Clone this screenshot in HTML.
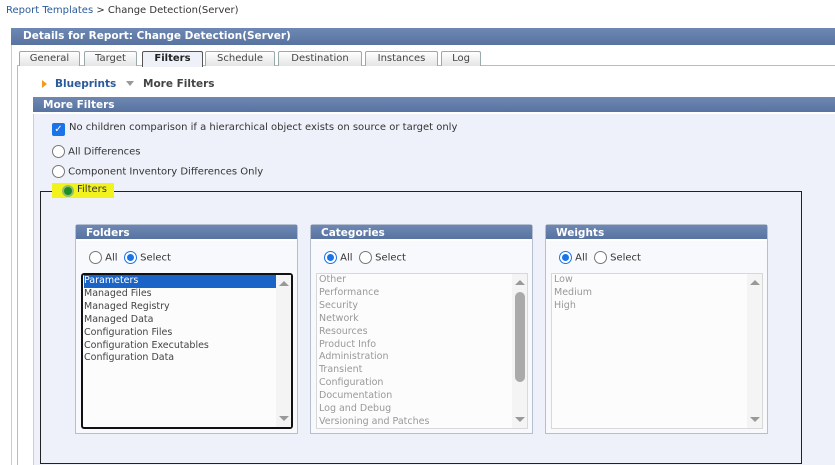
<!DOCTYPE html>
<html><head><style>
*{box-sizing:border-box}
body{margin:0;width:835px;height:465px;overflow:hidden;background:#fff;font-family:"DejaVu Sans",Verdana,sans-serif;font-size:10px;color:#333;position:relative}
.a{position:absolute}
.hdr{background:linear-gradient(#6e88b3,#5873a0);color:#fff;font-weight:bold;font-size:10.5px;padding-left:12px;line-height:17px}
.tab{position:absolute;top:51px;height:15px;border:1px solid #9aa;border-bottom:none;background:linear-gradient(#fff,#e4e4e4);text-align:center;font-size:10px;line-height:13px;color:#444;border-radius:2px 2px 0 0}
.rad{display:inline-block;width:13px;height:13px;border:1px solid #777;border-radius:50%;background:#fff;vertical-align:middle;position:relative}
.rad.on{border:1px solid #1a73e8}
.rad.on:after{content:"";position:absolute;left:2px;top:2px;width:7px;height:7px;border-radius:50%;background:#1a73e8}
.pan{position:absolute;top:224px;width:223px;height:210px;border:1px solid #b6bfcf;background:#f8f9fc;border-radius:3px 3px 0 0}
.pan .h{height:16px;background:linear-gradient(#6e88b3,#5873a0);color:#fff;font-weight:bold;font-size:10.5px;padding-left:10px;line-height:16px;border-bottom:2px solid #fff}
.list{position:absolute;left:5px;top:48px;width:212px;height:156px;border:1px solid #d8d8d8;background:#fcfcfc;font-size:9.5px;line-height:12.9px;color:#999;padding-left:2px}
.sb{position:absolute;right:0;top:0;width:15px;height:100%;background:#f4f4f4}
.up,.dn{position:absolute;left:3px;width:0;height:0;border-left:5px solid transparent;border-right:5px solid transparent}
.up{top:6px;border-bottom:5px solid #999}.dn{bottom:6px;border-top:5px solid #999}
.ro{position:absolute;left:13px;top:26px;font-size:10px;color:#333}
</style></head><body>
<div class="a" style="left:6px;top:5px;font-size:10px"><span style="color:#2a5a9a">Report Templates</span> &gt; Change Detection(Server)</div>
<div class="a hdr" style="left:11px;top:28px;width:824px;height:17px">Details for Report: Change Detection(Server)</div>
<div class="a" style="left:11px;top:45px;width:824px;height:420px;background:#fff;border-left:1px solid #ccc"></div>
<div class="a" style="left:17px;top:65px;width:818px;height:400px;border-left:1px solid #bbb;border-top:1px solid #bbb;background:#fff"></div>
<div class="tab" style="left:19px;width:61px">General</div>
<div class="tab" style="left:84px;width:53px">Target</div>
<div class="tab" style="left:142px;width:61px;font-weight:bold;color:#222;border-color:#555;background:#eef1f8;height:16px">Filters</div>
<div class="tab" style="left:205px;width:70px">Schedule</div>
<div class="tab" style="left:278px;width:84px">Destination</div>
<div class="tab" style="left:365px;width:73px">Instances</div>
<div class="tab" style="left:441px;width:40px">Log</div>
<div class="a" style="left:42px;top:80px;width:0;height:0;border-top:4px solid transparent;border-bottom:4px solid transparent;border-left:5px solid #f39a1e"></div>
<div class="a" style="left:55px;top:78px;font-weight:bold;color:#2a5a9a;font-size:10.5px">Blueprints</div>
<div class="a" style="left:126px;top:81px;width:0;height:0;border-left:4px solid transparent;border-right:4px solid transparent;border-top:5px solid #999"></div>
<div class="a" style="left:143px;top:78px;font-weight:bold;color:#444;font-size:10.5px">More Filters</div>
<div class="a hdr" style="left:33px;top:97px;width:802px;height:17px;line-height:16px;padding-left:10px;border-bottom:2px solid #fff">More Filters</div>
<div class="a" style="left:33px;top:114px;width:802px;height:351px;background:#eef1fa;border-left:1px solid #c8cede"></div>
<div class="a" style="left:52px;top:123px;width:13px;height:13px;background:#1a73e8;border-radius:2px;color:#fff;font-size:10px;line-height:13px;text-align:center;font-weight:bold">✓</div>
<div class="a" style="left:69px;top:122px">No children comparison if a hierarchical object exists on source or target only</div>
<div class="a" style="left:52px;top:145px"><span class="rad"></span> All Differences</div>
<div class="a" style="left:52px;top:165px"><span class="rad"></span> Component Inventory Differences Only</div>
<div class="a" style="left:40px;top:191px;width:762px;height:273px;border:1px solid #222"></div>
<div class="a" style="left:52px;top:183px;width:62px;height:15px;background:#f2f21e"></div>
<div class="a" style="left:62px;top:185px;width:12px;height:12px;border-radius:50%;background:#1f8c2a;border:2px solid #8fbf6a"></div>
<div class="a" style="left:77px;top:184px;color:#333">Filters</div>
<div class="pan" style="left:75px"><div class="h">Folders</div>
<div class="ro"><span class="rad"></span> All &nbsp;<span class="rad on"></span> Select</div>
<div class="list" style="border:2px solid #111;border-radius:3px;color:#444;padding-left:1px"><div style="background:#1a64c8;color:#fff;margin-right:15px">Parameters</div>Managed Files<br>Managed Registry<br>Managed Data<br>Configuration Files<br>Configuration Executables<br>Configuration Data<div class="sb"><div class="up"></div><div class="dn"></div></div></div></div>
<div class="pan" style="left:310px"><div class="h">Categories</div>
<div class="ro"><span class="rad on"></span> All &nbsp;<span class="rad"></span> Select</div>
<div class="list">Other<br>Performance<br>Security<br>Network<br>Resources<br>Product Info<br>Administration<br>Transient<br>Configuration<br>Documentation<br>Log and Debug<br>Versioning and Patches<div class="sb"><div class="up"></div><div style="position:absolute;left:3px;top:18px;width:10px;height:90px;background:#aaa;border-radius:5px"></div><div class="dn"></div></div></div></div>
<div class="pan" style="left:545px"><div class="h">Weights</div>
<div class="ro"><span class="rad on"></span> All &nbsp;<span class="rad"></span> Select</div>
<div class="list">Low<br>Medium<br>High<div class="sb"><div class="up"></div><div class="dn"></div></div></div></div>
</body></html>
